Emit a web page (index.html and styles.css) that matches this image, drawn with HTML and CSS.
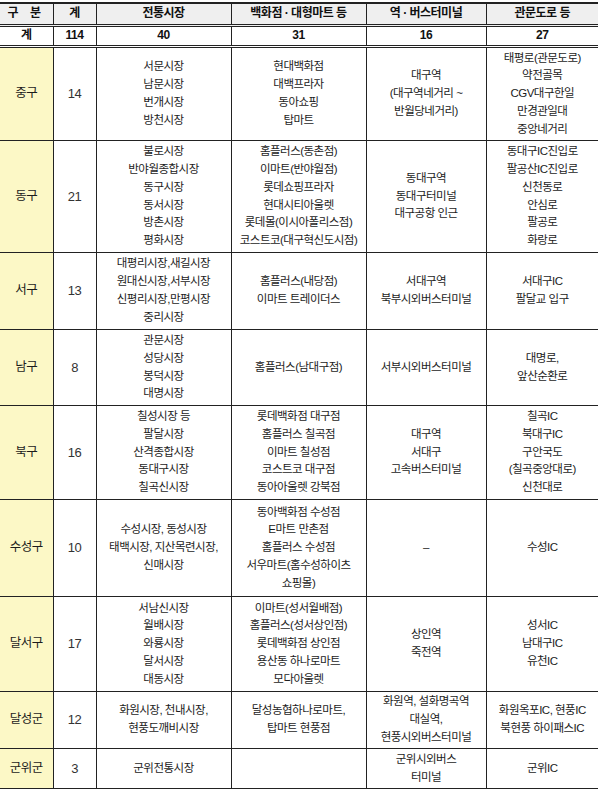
FILE: index.html
```html
<!DOCTYPE html>
<html lang="ko">
<head>
<meta charset="utf-8">
<title>대구 지역별 현황</title>
<link rel="stylesheet" href="styles.css">
</head>
<body>
<table class="grid">
  <colgroup>
    <col class="c1"><col class="c2"><col class="c3"><col class="c4"><col class="c5"><col class="c6">
  </colgroup>
  <thead>
    <tr class="head">
      <th class="wide">구 분</th>
      <th>계</th>
      <th>전통시장</th>
      <th>백화점 · 대형마트 등</th>
      <th>역 · 버스터미널</th>
      <th>관문도로 등</th>
    </tr>
    <tr class="total">
      <th>계</th>
      <th class="num">114</th>
      <th class="num">40</th>
      <th class="num">31</th>
      <th class="num">16</th>
      <th class="num">27</th>
    </tr>
  </thead>
  <tbody>
    <tr class="r-jung">
      <td class="gu gu2">중구</td>
      <td class="num">14</td>
      <td>서문시장<br>남문시장<br>번개시장<br>방천시장</td>
      <td>현대백화점<br>대백프라자<br>동아쇼핑<br>탑마트</td>
      <td>대구역<br>(대구역네거리 ~<br>반월당네거리)</td>
      <td>태평로(관문도로)<br>약전골목<br>CGV대구한일<br>만경관일대<br>중앙네거리</td>
    </tr>
    <tr class="r-dong">
      <td class="gu gu2">동구</td>
      <td class="num">21</td>
      <td>불로시장<br>반야월종합시장<br>동구시장<br>동서시장<br>방촌시장<br>평화시장</td>
      <td>홈플러스(동촌점)<br>이마트(반야월점)<br>롯데쇼핑프라자<br>현대시티아울렛<br>롯데몰(이시아폴리스점)<br>코스트코(대구혁신도시점)</td>
      <td>동대구역<br>동대구터미널<br>대구공항 인근</td>
      <td>동대구IC진입로<br>팔공산IC진입로<br>신천동로<br>안심로<br>팔공로<br>화랑로</td>
    </tr>
    <tr class="r-seo">
      <td class="gu gu2">서구</td>
      <td class="num">13</td>
      <td>대평리시장,새길시장<br>원대신시장,서부시장<br>신평리시장,만평시장<br>중리시장</td>
      <td>홈플러스(내당점)<br>이마트 트레이더스</td>
      <td>서대구역<br>북부시외버스터미널</td>
      <td>서대구IC<br>팔달교 입구</td>
    </tr>
    <tr class="r-nam">
      <td class="gu gu2">남구</td>
      <td class="num">8</td>
      <td>관문시장<br>성당시장<br>봉덕시장<br>대명시장</td>
      <td>홈플러스(남대구점)</td>
      <td>서부시외버스터미널</td>
      <td>대명로,<br>앞산순환로</td>
    </tr>
    <tr class="r-buk">
      <td class="gu gu2">북구</td>
      <td class="num">16</td>
      <td>칠성시장 등<br>팔달시장<br>산격종합시장<br>동대구시장<br>칠곡신시장</td>
      <td>롯데백화점 대구점<br>홈플러스 칠곡점<br>이마트 칠성점<br>코스트코 대구점<br>동아아울렛 강북점</td>
      <td>대구역<br>서대구<br>고속버스터미널</td>
      <td>칠곡IC<br>북대구IC<br>구안국도<br>(칠곡중앙대로)<br>신천대로</td>
    </tr>
    <tr class="r-suseong">
      <td class="gu">수성구</td>
      <td class="num">10</td>
      <td>수성시장, 동성시장<br>태백시장, 지산목련시장,<br>신매시장</td>
      <td>동아백화점 수성점<br>E마트 만촌점<br>홈플러스 수성점<br>서우마트(홈수성하이츠<br>쇼핑몰)</td>
      <td>–</td>
      <td>수성IC</td>
    </tr>
    <tr class="r-dalseo">
      <td class="gu">달서구</td>
      <td class="num">17</td>
      <td>서남신시장<br>월배시장<br>와룡시장<br>달서시장<br>대동시장</td>
      <td>이마트(성서월배점)<br>홈플러스(성서상인점)<br>롯데백화점 상인점<br>용산동 하나로마트<br>모다아울렛</td>
      <td>상인역<br>죽전역</td>
      <td>성서IC<br>남대구IC<br>유천IC</td>
    </tr>
    <tr class="r-dalseong">
      <td class="gu">달성군</td>
      <td class="num">12</td>
      <td>화원시장, 천내시장,<br>현풍도깨비시장</td>
      <td>달성농협하나로마트,<br>탑마트 현풍점</td>
      <td>화원역, 설화명곡역<br>대실역,<br>현풍시외버스터미널</td>
      <td>화원옥포IC, 현풍IC<br>북현풍 하이패스IC</td>
    </tr>
    <tr class="r-gunwi">
      <td class="gu">군위군</td>
      <td class="num">3</td>
      <td class="spaced">군위전통시장</td>
      <td></td>
      <td class="spaced">군위시외버스<br>터미널</td>
      <td>군위IC</td>
    </tr>
  </tbody>
</table>
</body>
</html>
```

FILE: styles.css
```css
html, body {
  margin: 0;
  padding: 0;
  background: #ffffff;
}

.grid {
  border-collapse: collapse;
  table-layout: fixed;
  width: 598px;
  margin-top: 2px;
  font-family: "Liberation Sans", "Noto Sans CJK KR", sans-serif;
  font-size: 11.5px;
  color: #1c1c1c;
  border-top: 2px solid #222;
  border-bottom: 1px solid #222;
}

.c1 { width: 53px; }
.c2 { width: 43px; }
.c3 { width: 135px; }
.c4 { width: 135px; }
.c5 { width: 120px; }
.c6 { width: 112px; }

.grid th,
.grid td {
  border: 1px solid #222;
  padding: 0;
  text-align: center;
  vertical-align: middle;
  line-height: 17.8px;
  letter-spacing: -0.5px;
  white-space: nowrap;
}

.grid th:first-child,
.grid td:first-child {
  border-left: none;
}

.grid th:last-child,
.grid td:last-child {
  border-right: none;
}

.head th {
  background: #efefef;
  height: 20px;
  font-size: 12px;
  font-weight: bold;
  color: #111;
  border-bottom: 3px double #222;
  border-top: none;
}

.head .wide {
  letter-spacing: 4px;
}

.total th {
  background: #ffffff;
  height: 18px;
  font-size: 12px;
  font-weight: bold;
  color: #111;
  border-bottom: 3px double #222;
}

.num {
  font-size: 13px;
  letter-spacing: 0;
  color: #333;
}

.total .num {
  font-size: 12px;
  color: #111;
}

.gu {
  background: #fcf8c6;
  font-size: 12.5px;
  letter-spacing: -1px;
}

.gu2 {
  letter-spacing: 2px;
  padding-left: 2px;
}

.spaced {
  letter-spacing: 1.5px;
}

.r-jung { height: 94px; }
.r-dong { height: 112px; }
.r-seo { height: 77px; }
.r-nam { height: 76px; }
.r-buk { height: 94px; }
.r-suseong { height: 97px; }
.r-dalseo { height: 95px; }
.r-dalseong { height: 57px; }
.r-gunwi { height: 40px; }
```
